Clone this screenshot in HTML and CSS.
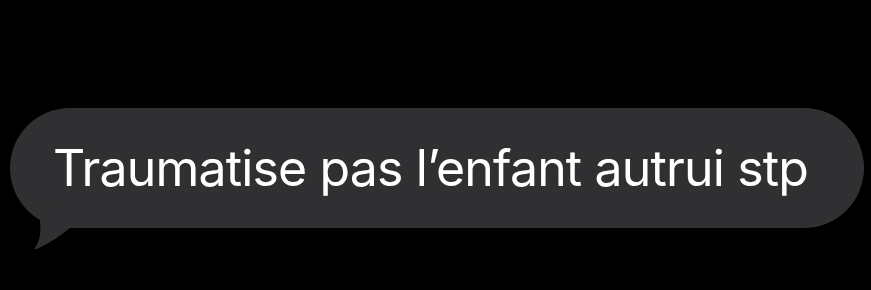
FILE: index.html
```html
<!DOCTYPE html>
<html lang="fr">
<head>
  <meta charset="UTF-8" />
  <title>Message</title>
  <link rel="stylesheet" href="styles.css">
</head>
<body>
  <div class="thread">
    <div class="message">
      <div class="bubble">
        <p class="text">Traumatise pas l’enfant autrui stp</p>
      </div>
      <svg class="tail" width="80" height="65" viewBox="0 0 80 65">
        <path d="M30 14 L30 32 C31 45 30 53 25 59.5 C24 61 26 61.5 28 60.5 C40 55 50 48 60 40 L72 30 L60 10 Z" fill="#303032"/>
      </svg>
    </div>
  </div>
</body>
</html>
```

FILE: styles.css
```css
body { margin: 0; background: #000; font-family: "Inter", "Noto Sans", sans-serif; }
.thread { padding: 108px 0 20px 10px; }
.message { position: relative; width: fit-content; padding-bottom: 25px; }
.bubble {
  height: 120px;
  padding: 0 56px 0 43px;
  background: #303032; color: #fff;
  border-radius: 60px;
}
.text {
  margin: 0;
  font-size: 50px; line-height: 120px;
  letter-spacing: -0.85px;
  white-space: nowrap;
}
.tail { position: absolute; left: 0; top: 80px; display: block; }
```
